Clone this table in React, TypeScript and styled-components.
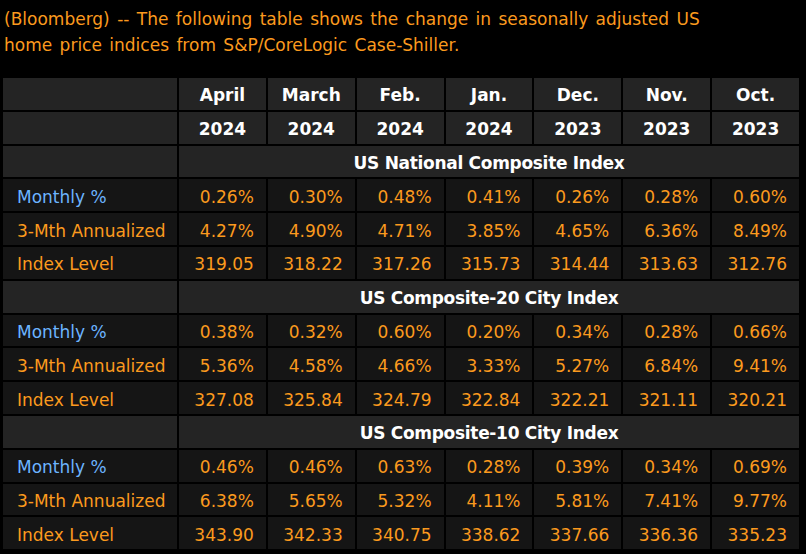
import React from "react";
import styled, { createGlobalStyle } from "styled-components";

const GlobalStyle = createGlobalStyle`
  html, body {
    margin: 0;
    padding: 0;
    background: #000;
  }
  body {
    font-family: "DejaVu Sans", "Liberation Sans", sans-serif;
    -webkit-font-smoothing: none;
  }
`;

const Page = styled.div`
  width: 806px;
  height: 554px;
  background: #000;
  overflow: hidden;
`;

const Intro = styled.p`
  margin: 0;
  padding: 6px 0 0 4px;
  color: #fb9a1e;
  font-size: 17px;
  line-height: 26px;
  word-spacing: 2px;
  height: 72px;
`;

const Table = styled.div`
  margin-left: 3px;
  width: 796px;
  display: grid;
  grid-template-columns: 174px repeat(7, 1fr);
  grid-auto-rows: 31.8px;
  gap: 2px;
  background: #000;
`;

const Cell = styled.div<{ $tone: "head" | "body" }>`
  background: ${(p) => (p.$tone === "head" ? "#242424" : "#151515")};
  display: flex;
  align-items: center;
  padding-top: 3px;
  box-sizing: border-box;
  font-size: 17px;
  white-space: nowrap;
`;

const HeadCell = styled(Cell)`
  justify-content: center;
  color: #fff;
  font-weight: bold;
`;

const SectionTitle = styled(Cell)`
  grid-column: 2 / span 7;
  justify-content: center;
  color: #fff;
  font-weight: bold;
  letter-spacing: -0.3px;
`;

const Label = styled(Cell)<{ $blue?: boolean }>`
  padding-left: 14px;
  color: ${(p) => (p.$blue ? "#6cb4ff" : "#fb9a1e")};
`;

const Value = styled(Cell)`
  justify-content: flex-end;
  padding-right: 12px;
  color: #fb9a1e;
`;

const months = ["April", "March", "Feb.", "Jan.", "Dec.", "Nov.", "Oct."];
const years = ["2024", "2024", "2024", "2024", "2023", "2023", "2023"];

const sections = [
  {
    title: "US National Composite Index",
    monthly: ["0.26%", "0.30%", "0.48%", "0.41%", "0.26%", "0.28%", "0.60%"],
    annualized: ["4.27%", "4.90%", "4.71%", "3.85%", "4.65%", "6.36%", "8.49%"],
    level: ["319.05", "318.22", "317.26", "315.73", "314.44", "313.63", "312.76"],
  },
  {
    title: "US Composite-20 City Index",
    monthly: ["0.38%", "0.32%", "0.60%", "0.20%", "0.34%", "0.28%", "0.66%"],
    annualized: ["5.36%", "4.58%", "4.66%", "3.33%", "5.27%", "6.84%", "9.41%"],
    level: ["327.08", "325.84", "324.79", "322.84", "322.21", "321.11", "320.21"],
  },
  {
    title: "US Composite-10 City Index",
    monthly: ["0.46%", "0.46%", "0.63%", "0.28%", "0.39%", "0.34%", "0.69%"],
    annualized: ["6.38%", "5.65%", "5.32%", "4.11%", "5.81%", "7.41%", "9.77%"],
    level: ["343.90", "342.33", "340.75", "338.62", "337.66", "336.36", "335.23"],
  },
];

export default function App() {
  return (
    <Page>
      <GlobalStyle />
      <Intro>
        (Bloomberg) -- The following table shows the change in seasonally adjusted US
        <br />
        home price indices from S&amp;P/CoreLogic Case-Shiller.
      </Intro>

      <Table>
        <HeadCell $tone="head" />
        {months.map((m) => (
          <HeadCell $tone="head" key={m}>
            {m}
          </HeadCell>
        ))}
        <HeadCell $tone="head" />
        {years.map((y, i) => (
          <HeadCell $tone="head" key={i}>
            {y}
          </HeadCell>
        ))}

        {sections.map((s) => (
          <React.Fragment key={s.title}>
            <Cell $tone="head" />
            <SectionTitle $tone="head">{s.title}</SectionTitle>

            <Label $tone="body" $blue>
              Monthly %
            </Label>
            {s.monthly.map((v, i) => (
              <Value $tone="body" key={"m" + i}>
                {v}
              </Value>
            ))}

            <Label $tone="body">3-Mth Annualized</Label>
            {s.annualized.map((v, i) => (
              <Value $tone="body" key={"a" + i}>
                {v}
              </Value>
            ))}

            <Label $tone="body">Index Level</Label>
            {s.level.map((v, i) => (
              <Value $tone="body" key={"l" + i}>
                {v}
              </Value>
            ))}
          </React.Fragment>
        ))}
      </Table>
    </Page>
  );
}
